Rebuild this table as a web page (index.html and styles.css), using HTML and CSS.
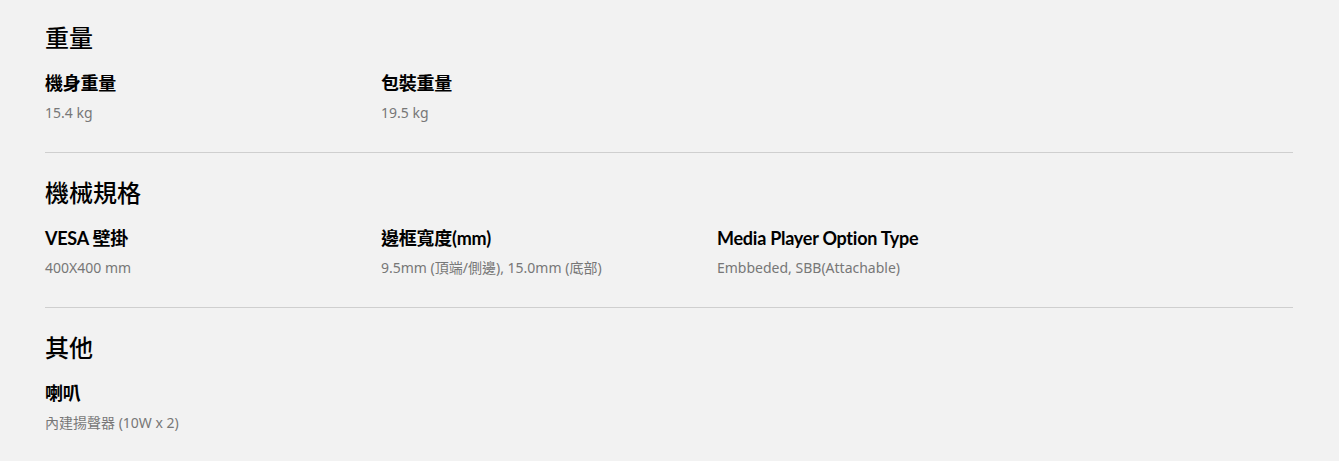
FILE: index.html
```html
<!DOCTYPE html>
<html lang="zh-Hant">
<head>
<meta charset="utf-8">
<link rel="stylesheet" href="styles.css">
</head>
<body>
<div class="specs">
  <section class="group">
    <h2 class="group-title">重量</h2>
    <div class="items">
      <div class="item"><h3 class="label">機身重量</h3><p class="value">15.4 kg</p></div>
      <div class="item"><h3 class="label">包裝重量</h3><p class="value">19.5 kg</p></div>
    </div>
  </section>
  <section class="group">
    <h2 class="group-title">機械規格</h2>
    <div class="items">
      <div class="item"><h3 class="label">VESA 壁掛</h3><p class="value">400X400 mm</p></div>
      <div class="item"><h3 class="label">邊框寬度(mm)</h3><p class="value">9.5mm (頂端/側邊), 15.0mm (底部)</p></div>
      <div class="item"><h3 class="label">Media Player Option Type</h3><p class="value">Embbeded, SBB(Attachable)</p></div>
    </div>
  </section>
  <section class="group last">
    <h2 class="group-title">其他</h2>
    <div class="items">
      <div class="item"><h3 class="label">喇叭</h3><p class="value">內建揚聲器 (10W x 2)</p></div>
    </div>
  </section>
</div>
</body>
</html>
```
FILE: styles.css
```css
html, body {
  margin: 0;
  padding: 0;
  background: #f2f2f2;
}
body {
  font-family: "Noto Sans", "Noto Sans CJK TC", sans-serif;
  color: #000;
}
.specs {
  width: 1248px;
  margin-left: 45px;
  padding-top: 22px;
}
.group {
  border-bottom: 1px solid #cfcfcf;
  padding-bottom: 29px;
  margin-bottom: 24px;
}
.group.last {
  border-bottom: none;
  padding-bottom: 20px;
  margin-bottom: 0;
}
.group-title {
  margin: 0;
  font-size: 24px;
  line-height: 32px;
  font-weight: 500;
}
.items {
  display: grid;
  grid-template-columns: repeat(3, 336px);
  margin-top: 17px;
}
.label {
  margin: 0;
  font-family: "Lato", "Noto Sans CJK TC", sans-serif;
  font-size: 18px;
  line-height: 24px;
  font-weight: 700;
  letter-spacing: -0.25px;
}
.value {
  margin: 8px 0 0;
  font-size: 14px;
  line-height: 20px;
  color: #777;
}
```
